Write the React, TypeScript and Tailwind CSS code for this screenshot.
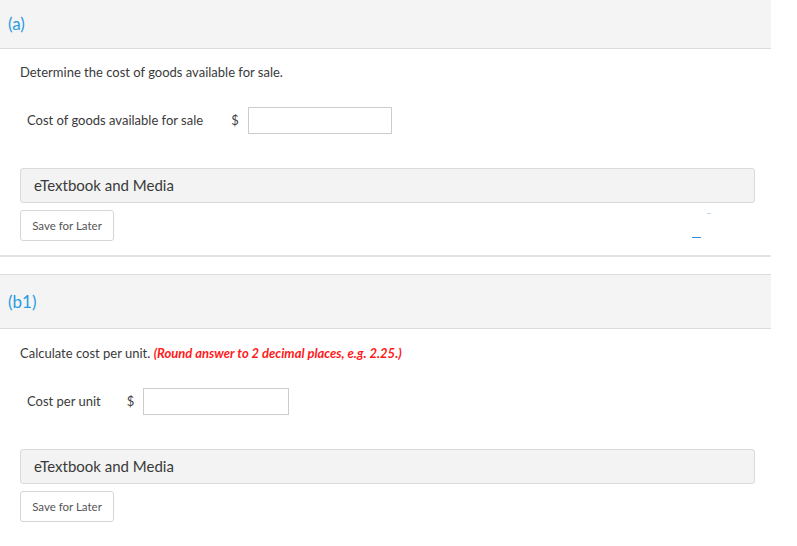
export default function App() {
  return (
    <div className="w-[797px] h-[546px] bg-white overflow-hidden relative" style={{ fontFamily: 'Lato, "Open Sans", sans-serif' }}>
      <div className="w-[771px]">
        {/* part a */}
        <div className="h-[49px] bg-[#f4f4f4] border-b border-[#dcdcdc] flex items-center pl-[8px]">
          <span className="text-[17px] text-[#2a9be0]">(a)</span>
        </div>
        <div className="pl-[20px] pt-[14px]">
          <p className="text-[13px] text-[#3a3a3a] leading-[18px]">Determine the cost of goods available for sale.</p>
          <div className="flex items-center mt-[26px] pl-[7px]">
            <span className="text-[13px] text-[#3a3a3a]">Cost of goods available for sale</span>
            <span className="text-[13px] text-[#444] ml-[28px]">$</span>
            <div className="ml-[9px] w-[144px] h-[27px] border border-[#ccc] bg-white" />
          </div>
          <div className="mt-[34px] mr-[16px] h-[35px] bg-[#f3f3f3] border border-[#dadada] rounded-[3px] flex items-center pl-[13px]">
            <span className="text-[15px] text-[#3a3a3a]">eTextbook and Media</span>
          </div>
          <div className="mt-[7px] w-[94px] h-[31px] border border-[#d6d6d6] rounded-[3px] flex items-center justify-center">
            <span className="text-[11.5px] text-[#555]">Save for Later</span>
          </div>
        </div>
        <div className="mt-[14px] border-b-2 border-[#e2e2e2]" />

        {/* part b1 */}
        <div className="mt-[17px] h-[55px] bg-[#f4f4f4] border-y border-[#dcdcdc] flex items-center pl-[8px]">
          <span className="text-[17px] text-[#2a9be0]">(b1)</span>
        </div>
        <div className="pl-[20px] pt-[15px]">
          <p className="text-[13px] text-[#3a3a3a] leading-[18px]">
            Calculate cost per unit.{' '}
            <span className="text-[#ff1a1a] font-bold italic">(Round answer to 2 decimal places, e.g. 2.25.)</span>
          </p>
          <div className="flex items-center mt-[26px] pl-[7px]">
            <span className="text-[13px] text-[#3a3a3a]">Cost per unit</span>
            <span className="text-[13px] text-[#444] ml-[26px]">$</span>
            <div className="ml-[9px] w-[146px] h-[27px] border border-[#ccc] bg-white" />
          </div>
          <div className="mt-[34px] mr-[16px] h-[35px] bg-[#f3f3f3] border border-[#dadada] rounded-[3px] flex items-center pl-[13px]">
            <span className="text-[15px] text-[#3a3a3a]">eTextbook and Media</span>
          </div>
          <div className="mt-[7px] w-[94px] h-[31px] border border-[#d6d6d6] rounded-[3px] flex items-center justify-center">
            <span className="text-[11.5px] text-[#555]">Save for Later</span>
          </div>
        </div>
      </div>
      {/* stray marks */}
      <div className="absolute left-[692px] top-[237px] w-[9px] h-[1px] bg-[#3b8fd6]" />
      <div className="absolute left-[707px] top-[213px] w-[4px] h-[1px] bg-[#b7d6f0]" />
    </div>
  )
}
